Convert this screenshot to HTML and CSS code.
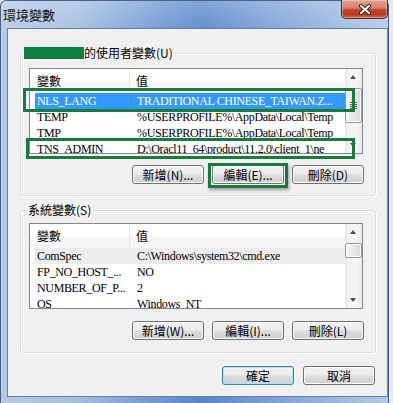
FILE: index.html
```html
<!DOCTYPE html>
<html lang="zh-Hant">
<head>
  <meta charset="UTF-8" />
  <meta name="viewport" content="width=device-width, initial-scale=1" />
  <title>環境變數</title>
  <link rel="stylesheet" href="styles.css">
</head>
<body>
  <div class="window">
    <div class="titlebar">
      <span class="title">環境變數</span>
      <button class="close" aria-label="關閉">
        <svg width="14" height="11" viewBox="0 0 14 11">
          <path d="M3 2 L11 9 M11 2 L3 9" stroke="#3a1a14" stroke-width="4" stroke-linecap="round" />
          <path d="M3 2 L11 9 M11 2 L3 9" stroke="#ffffff" stroke-width="2.2" stroke-linecap="round" />
        </svg>
      </button>
    </div>

    <div class="client">
      <fieldset class="group group-user">
        <legend class="legend-user"><span class="redact"></span>的使用者變數(U)</legend>
        <div class="listview">
          <div class="lv-body">
            <div class="lv-header"><span class="hcol1">變數</span><span class="hcol2">值</span></div>
            <div class="lv-row selected"><span class="col1">NLS_LANG</span><span class="col2">TRADITIONAL CHINESE_TAIWAN.Z...</span></div>
            <div class="lv-row"><span class="col1">TEMP</span><span class="col2">%USERPROFILE%\AppData\Local\Temp</span></div>
            <div class="lv-row"><span class="col1">TMP</span><span class="col2">%USERPROFILE%\AppData\Local\Temp</span></div>
            <div class="lv-row"><span class="col1">TNS_ADMIN</span><span class="col2">D:\Oracl11_64\product\11.2.0\client_1\ne</span></div>
          </div>
          <div class="scrollbar">
            <span class="sb-arrow up"></span>
            <span class="sb-track"><span class="sb-thumb thumb-tall"><span class="grip"></span></span></span>
            <span class="sb-arrow down"></span>
          </div>
        </div>
        <div class="btn-row">
          <button class="btn">新增(N)...</button>
          <button class="btn">編輯(E)...</button>
          <button class="btn">刪除(D)</button>
        </div>
      </fieldset>

      <fieldset class="group group-system">
        <legend class="legend-system">系統變數(S)</legend>
        <div class="listview">
          <div class="lv-body">
            <div class="lv-header"><span class="hcol1">變數</span><span class="hcol2">值</span></div>
            <div class="lv-row inactive"><span class="col1">ComSpec</span><span class="col2">C:\Windows\system32\cmd.exe</span></div>
            <div class="lv-row"><span class="col1">FP_NO_HOST_...</span><span class="col2">NO</span></div>
            <div class="lv-row"><span class="col1">NUMBER_OF_P...</span><span class="col2">2</span></div>
            <div class="lv-row"><span class="col1">OS</span><span class="col2">Windows_NT</span></div>
          </div>
          <div class="scrollbar">
            <span class="sb-arrow up"></span>
            <span class="sb-track"><span class="sb-thumb thumb-short"></span></span>
            <span class="sb-arrow down"></span>
          </div>
        </div>
        <div class="btn-row">
          <button class="btn">新增(W)...</button>
          <button class="btn">編輯(I)...</button>
          <button class="btn">刪除(L)</button>
        </div>
      </fieldset>

      <div class="dialog-buttons">
        <button class="btn btn-default">確定</button>
        <button class="btn">取消</button>
      </div>

      <!-- annotation boxes drawn over the dialog -->
      <div class="mark mark-nls"></div>
      <div class="mark mark-tns"></div>
      <div class="mark mark-edit"></div>
    </div>
  </div>
</body>
</html>
```

FILE: styles.css
```css
* { box-sizing: border-box; }
body { margin: 0; background: #e4ebf4; font-family: "Noto Sans CJK TC", sans-serif; font-size: 12px; color: #000; overflow: hidden; }

.window {
  width: 389px; height: 403px;
  border: 1px solid #4b6288; border-bottom: none;
  border-radius: 6px 6px 0 0;
  background:
    linear-gradient(to bottom, rgba(255,255,255,0.25), rgba(255,255,255,0) 40px),
    linear-gradient(to right, #b6cae6 0%, #a3bde2 20%, #6b95d2 42%, #5886cb 52%, #7fa4d9 72%, #b3c9e7 100%);
}

.titlebar { height: 27px; display: flex; justify-content: space-between; align-items: flex-start; padding-left: 2px; }
.title { line-height: 27px; font-size: 13px; color: #111; }
.close {
  width: 47px; height: 19px; margin-top: -1px; margin-right: 0;
  border: 1px solid #5a2219; border-top: none; border-radius: 0 0 5px 5px;
  background: linear-gradient(to bottom, #e2a597 0%, #d67d6a 45%, #c0432b 55%, #b63a22 80%, #cf6b4c 100%);
  box-shadow: inset 0 0 0 1px rgba(255,210,200,0.45);
  display: flex; align-items: center; justify-content: center; padding: 0;
}

.client {
  position: relative;
  margin-left: 6px; width: 381px; height: 369px;
  border: 1px solid #6e7f9a;
  background: #f0f0f0;
}

.group {
  width: 356px; margin: 0 0 0 12px;
  border: 1px solid #d5dfe5; border-radius: 3px;
  padding: 8px 11px 11px 8px;
  box-shadow: inset 1px 1px 0 #fff, 1px 1px 0 #fff;
}
.group-user { margin-top: 17px; }
.group-system { margin-top: 7px; padding-top: 6px; padding-bottom: 12px; }
.group-system .btn-row { margin-top: 12px; }

legend { height: 14px; line-height: 14px; display: flex; align-items: center; font-size: 12px; padding: 0 2px 0 1px; }
.legend-user { margin-left: -6px; }
.legend-system { margin-left: -2px; }
.redact { display: inline-block; width: 60px; height: 12px; background: #0a7f41; }

.listview { width: 334px; height: 86px; border: 1px solid #828790; background: #fff; display: flex; overflow: hidden; }
.lv-body { flex: 1; overflow: hidden; }
.lv-header { height: 24px; display: flex; background: linear-gradient(to bottom, #fff 55%, #f6f7f9 55%); }
.hcol1 { width: 100px; padding-left: 7px; line-height: 23px; border-right: 1px solid #e5e8ed; }
.hcol2 { padding-left: 6px; line-height: 23px; }

.lv-row { height: 16px; margin-left: 5px; display: flex; white-space: nowrap; font-family: "Liberation Serif", "Noto Sans CJK TC", serif; font-size: 12px; letter-spacing: -0.35px; line-height: 16px; }
.lv-row .col1 { width: 94px; padding-left: 2px; overflow: hidden; }
.lv-row .col2 { flex: 1; padding-left: 8px; overflow: hidden; }
.lv-row.selected { background: #3399ff; color: #fff; }
.lv-row.inactive { background: #ececec; }

.scrollbar { width: 17px; display: flex; flex-direction: column; background: linear-gradient(to right, #e9e9e9, #f5f5f5 30%, #f5f5f5 70%, #e9e9e9); }
.sb-arrow { height: 17px; position: relative; }
.sb-arrow::before { content: ""; position: absolute; left: 5px; border-left: 3.5px solid transparent; border-right: 3.5px solid transparent; }
.sb-arrow.up::before { top: 6px; border-bottom: 4px solid #4d4d4d; }
.sb-arrow.down::before { top: 7px; border-top: 4px solid #4d4d4d; }
.sb-track { flex: 1; padding: 2px 0 0 0; }
.sb-thumb { display: flex; align-items: center; justify-content: center; width: 17px; border: 1px solid #979797; border-radius: 2px; background: linear-gradient(to right, #f4f4f4, #e8e8e8 50%, #d9d9d9); box-shadow: inset 0 0 0 1px #fbfbfb; }
.thumb-tall { height: 35px; }
.thumb-short { height: 15px; }
.grip { width: 7px; height: 7px; background: repeating-linear-gradient(to bottom, #5c5c5c 0 1px, transparent 1px 2px); }

.btn-row { display: flex; justify-content: flex-end; gap: 8px; margin-top: 11px; width: 335px; }
.btn {
  width: 72px; height: 19px; padding: 0;
  font-family: "Noto Sans CJK TC", sans-serif; font-size: 12px; color: #000; line-height: 17px;
  border: 1px solid #707070; border-radius: 3px;
  background: linear-gradient(to bottom, #f2f2f2 0%, #ebebeb 48%, #dddddd 52%, #cfcfcf 100%);
  box-shadow: inset 0 0 0 1px #fcfcfc;
}
.btn-default { border-color: #3c7fb1; box-shadow: inset 0 0 0 1px #aee3f7; }

.dialog-buttons { display: flex; justify-content: flex-end; gap: 9px; margin-top: 13px; padding-right: 12px; }

.mark { position: absolute; border: 3px solid #1a7a3e; }
.mark-nls { left: 15px; top: 59px; width: 332px; height: 24px; }
.mark-tns { left: 18px; top: 109px; width: 329px; height: 21px; }
.mark-edit { left: 200px; top: 134px; width: 80px; height: 25px; box-shadow: 1px 2px 3px rgba(0,0,0,0.35); }
```
